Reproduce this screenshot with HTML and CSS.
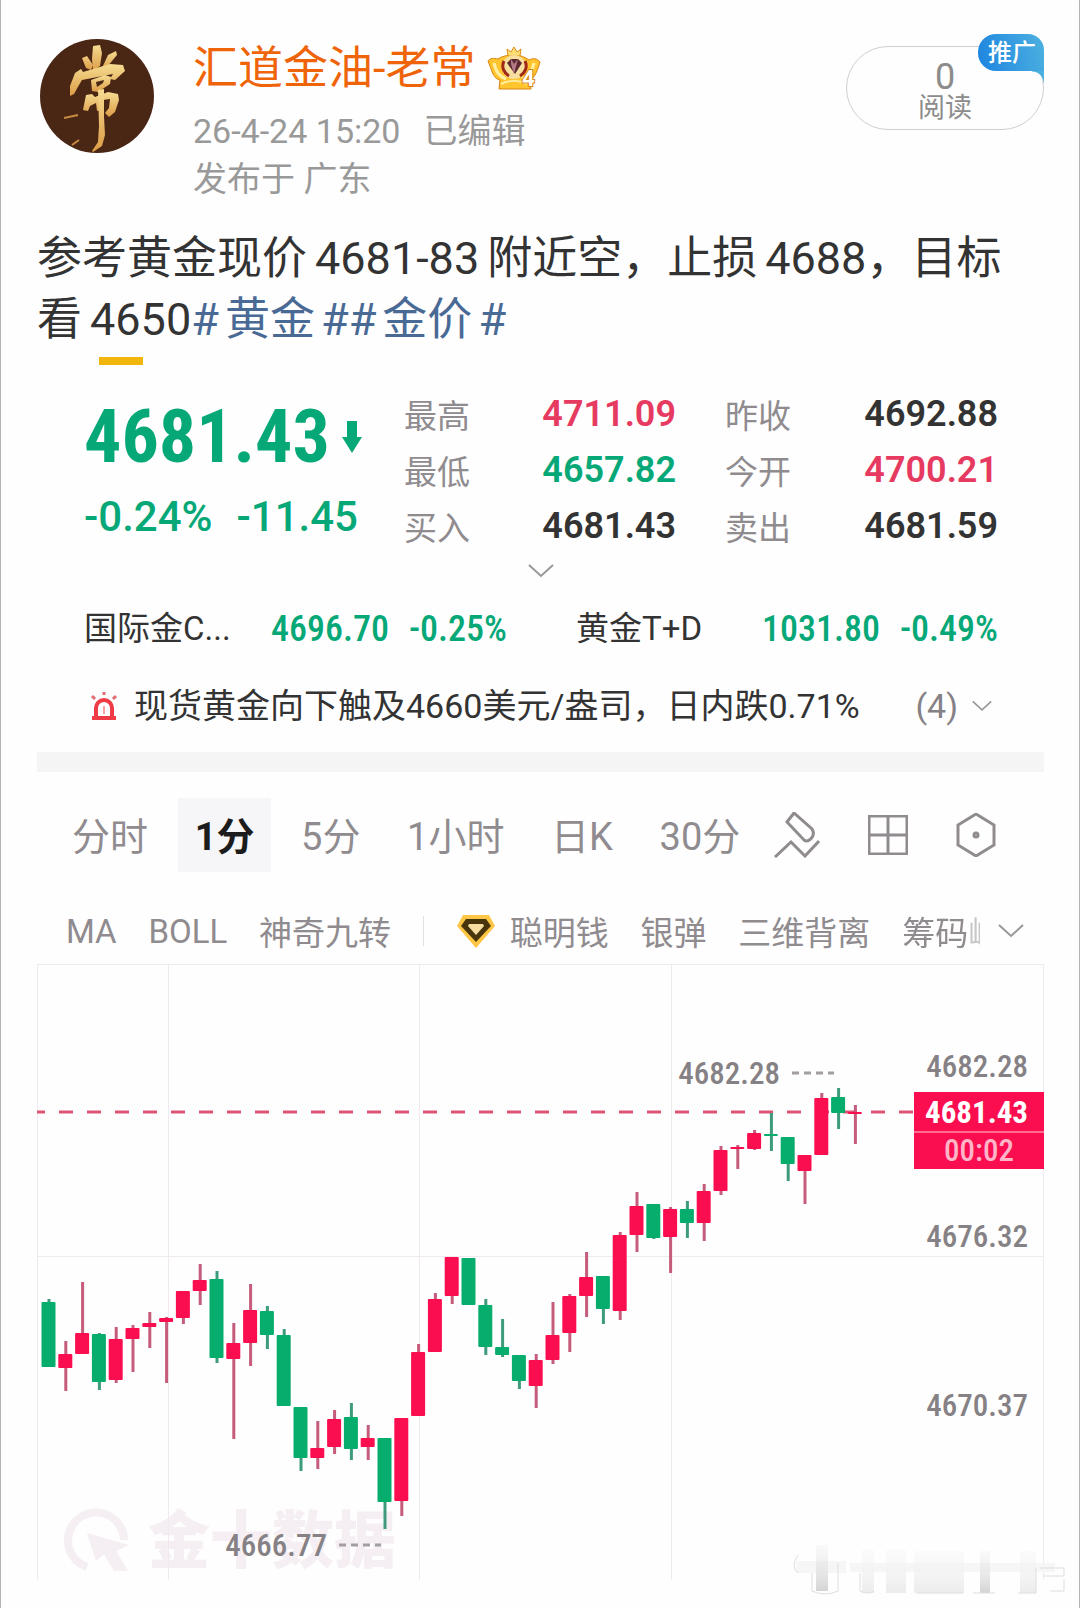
FILE: index.html
```html
<!DOCTYPE html>
<html lang="zh-CN">
<head>
<meta charset="utf-8">
<meta name="viewport" content="width=device-width, initial-scale=1">
<title>汇道金油-老常</title>
<link rel="stylesheet" href="styles.css">
</head>
<body>
<article class="post">
  <header class="post-head">
    <svg class="avatar" viewBox="0 0 114 114" role="img" aria-label="头像">
      <defs><linearGradient id="gold" x1="0" y1="0" x2="0" y2="1"><stop offset="0" stop-color="#f6dc92"/><stop offset="1" stop-color="#dc9c45"/></linearGradient></defs>
      <circle cx="57" cy="57" r="57" fill="#4a2615"/>
      <g fill="url(#gold)">
        <path d="M53 7l7-1 2 8-2 13-7 5-1-12z"/>
        <path d="M42 19l5-2 6 9-2 5-5-2zM68 16l8-4 1 4-10 12-5 1z"/>
        <path d="M35 34l6-4 2 3 27-8 13 1 2 6-10 9-5-1 3-5-31 6-3 5-5 9-4 2 0-10z"/>
        <path fill-rule="evenodd" d="M51 41l14-5 6 2-1 7-12 8-6-1zM56 43l8-2-1 3-6 4z"/>
        <path fill-rule="evenodd" d="M46 56l6-1 3 3 13-5 10 2 1 6-4 12-6 5-4-4 4-5 1-9-7 1-2 10-4 1-1-8-6 3-2 5-5-1z"/>
        <path d="M58 51l6-1 0 28 1 18-3 11-9 6-1-1 6-9 1-16z"/>
      </g>
      <path d="M24 79l14-3M32 106l7-5" fill="none" stroke="#c98b3f" stroke-width="2"/>
    </svg>
    <div class="author">
      <h1 class="name"><a href="#">汇道金油-老常</a>
        <svg class="crown" viewBox="0 0 54 46" aria-hidden="true">
          <path d="M11 13C7 12 3 12 1 15c2 4 3 9 5 13s4 5 7 6l-1 9h32l-1-9c5-2 8-11 10-18-3-4-7-4-11-2-4-3-9-5-15-5s-12 1-16 4z" fill="#ffc42e" stroke="#d98410"/>
          <path d="M20 3l4 3 3-5 3 5 4-3-1 7H21z" fill="#ffdf74" stroke="#de8d16"/>
          <path d="M7 17c2 9 5 13 12 16M47 17c-2 9-5 13-12 16" fill="none" stroke="#fff0a4" stroke-width="3"/>
          <circle cx="27" cy="21" r="12" fill="#f7dfa0"/>
          <path d="M17 15c-3 6 0 12 5 15M38 15c3 6 0 12-5 15" fill="none" stroke="#a02819" stroke-width="3"/>
          <path d="M20 17l4-4h7l4 4-7 11z" fill="#5d2930"/><path d="M24 13l3 5 4-5-4 15-3-10" fill="#b27886"/>
          <path d="M14 38c8-4 18-4 26 0" fill="none" stroke="#fff0a4" stroke-width="2"/>
          <text x="35" y="40" class="crown-level">4</text>
        </svg>
      </h1>
      <p class="meta"><time>26-4-24 15:20</time><span>已编辑</span></p>
      <p class="meta">发布于 广东</p>
    </div>
    <div class="reads">
      <strong>0</strong><span>阅读</span>
      <a class="promo" href="#">推广</a>
    </div>
  </header>

  <p class="body-text">参考黄金现价<span class="num">4681-83</span>附近空，止损<span class="num num-end">4688</span>，目标看<span class="num num-end">4650</span><a href="#">#<span class="topic">黄金</span>#</a><a href="#">#<span class="topic">金价</span>#</a></p>

  <section class="quote">
    <div class="tab-mark"></div>
    <div class="summary">
      <div class="price">
        <p class="last">4681.43<svg class="down" viewBox="0 0 20 32" aria-label="下跌"><path d="M5 0h10v16h5L10 32 0 16h5z"/></svg></p>
        <p class="change"><span>-0.24%</span><span>-11.45</span></p>
      </div>
      <dl class="stats">
        <div><dt>最高</dt><dd class="up">4711.09</dd></div>
        <div><dt>最低</dt><dd class="fall">4657.82</dd></div>
        <div><dt>买入</dt><dd>4681.43</dd></div>
      </dl>
      <dl class="stats">
        <div><dt>昨收</dt><dd>4692.88</dd></div>
        <div><dt>今开</dt><dd class="up">4700.21</dd></div>
        <div><dt>卖出</dt><dd>4681.59</dd></div>
      </dl>
    </div>
    <button class="expand" aria-label="展开"><svg class="chev" viewBox="0 0 26 14"><path d="M1 1l12 11L25 1"/></svg></button>
    <div class="related">
      <div class="pair"><span class="pair-name">国际金C...</span><span class="pair-data"><b>4696.70</b><b>-0.25%</b></span></div>
      <div class="pair"><span class="pair-name">黄金T+D</span><span class="pair-data"><b>1031.80</b><b>-0.49%</b></span></div>
    </div>
    <div class="alert">
      <svg class="siren" viewBox="0 0 28 30" aria-hidden="true"><path d="M6 26V17a8 8 0 0 1 16 0v9M2 27h24" fill="none" stroke="#ee3b46" stroke-width="4"/><path d="M14 15v8" stroke="#f6a0a4" stroke-width="2"/><path d="M14 1v3M2 5l3 3M26 5l-3 3" stroke="#e46b70" stroke-width="3"/></svg>
      <a class="alert-text" href="#">现货黄金向下触及4660美元/盎司，日内跌0.71%</a>
      <span class="alert-count">(4)</span>
      <svg class="chev chev-small" viewBox="0 0 26 14" aria-hidden="true"><path d="M1 1l12 11L25 1"/></svg>
    </div>
    <div class="band"></div>
    <nav class="periods">
      <button>分时</button>
      <button class="active">1分</button>
      <button>5分</button>
      <button>1小时</button>
      <button>日K</button>
      <button>30分</button>
      <div class="tools">
        <button aria-label="画线"><svg class="tool" viewBox="0 0 46 46"><path d="M20 1l-7 9 17 18c4 3 11-3 9-9l-1-2zM1 45l16-15 14 14 14-15"/></svg></button>
        <button aria-label="布局"><svg class="tool tool-grid" viewBox="0 0 40 40"><path d="M1 1h38v38H1zM20 1v38M1 20h38"/></svg></button>
        <button aria-label="设置"><svg class="tool tool-hex" viewBox="0 0 40 44"><path d="M20 1l18 11v20L20 43 2 32V12z"/><circle cx="20" cy="22" r="2"/></svg></button>
      </div>
    </nav>
    <nav class="indicators">
      <button>MA</button>
      <button>BOLL</button>
      <button>神奇九转</button>
      <span class="rule"></span>
      <button class="with-gem"><svg class="gem" viewBox="0 0 40 36" aria-hidden="true"><path d="M7 2h26l6 11-19 22L1 13z" fill="#ffc545"/><path d="M10 6h20l5 7-15 16L5 13z" fill="#49350c"/><path d="M13 11h14l1 2-8 9-8-9z" fill="#f7dda0"/></svg>聪明钱</button>
      <button>银弹</button>
      <button>三维背离</button>
      <button class="cut">筹码峰</button>
      <button class="more" aria-label="更多"><svg class="chev" viewBox="0 0 26 14"><path d="M1 1l12 11L25 1"/></svg></button>
    </nav>
    <svg class="chart" viewBox="37 964 1007 616" role="img" aria-label="1分钟K线图">
      <g class="mark">
        <path d="M87 1567a28 28 0 1 1 37-27" fill="none" stroke="#f5eef2" stroke-width="8"/>
        <path d="M87 1533l42 12-13 6 12 20h-14l-10-17-8 7z" fill="#f5eef2"/>
        <text x="148" y="1563">金十数据</text>
      </g>
      <path class="grid" d="M37 964.500h1007M37.500 964v616M168.500 964v616M419.500 964v616M671.500 964v616M1043.500 964v616M37 1256.500h1007"/>
      <path class="now" d="M37 1112H914"/>
      <g id="candles"></g>
      <path class="lead" d="M792 1073h42M339 1545h42"/>
      <text class="tick" x="780" y="1084" text-anchor="end">4682.28</text>
      <text class="tick" x="327" y="1556" text-anchor="end">4666.77</text>
      <text class="tick" x="1028" y="1077" text-anchor="end">4682.28</text>
      <text class="tick" x="1028" y="1247" text-anchor="end">4676.32</text>
      <text class="tick" x="1028" y="1416" text-anchor="end">4670.37</text>
      <path d="M914 1092h130v77H914z" fill="#fb0e50"/>
      <path d="M914 1132h130" stroke="#ff6a90" stroke-width="2"/>
      <text class="tick tick-now" x="1028" y="1123" text-anchor="end">4681.43</text>
      <text class="tick tick-time" x="979" y="1161" text-anchor="middle">00:02</text>
    </svg>
  </section>

  <svg class="smear" viewBox="0 0 280 54" aria-hidden="true">
    <defs><linearGradient id="fade" x1="0" y1="0" x2="0" y2="1"><stop offset="0" stop-color="#eee" stop-opacity=".3"/><stop offset="1" stop-color="#d4d4d4"/></linearGradient>
    <linearGradient id="soft" x1="0" y1="0" x2="0" y2="1"><stop offset="0" stop-color="#f7f7f7" stop-opacity=".4"/><stop offset="1" stop-color="#ececec"/></linearGradient></defs>
    <path d="M6 18h50v12H6zM60 20h205v9H60z" fill="#f6f6f6"/>
    <path d="M26 2h12v46H26z" fill="url(#fade)"/>
    <path d="M72 6h12v44H72zM96 6h20v44H96zM124 8h50v42h-50zM230 8h16v42h-16z" fill="url(#soft)"/>
    <path d="M190 8h10v42h-10z" fill="url(#fade)"/>
    <path d="M22 30v18q13 6 26 0V20M8 12q-8 12 0 18M70 30v18q8 4 14 0M127 50h46M183 50h22M228 50h18v-25M250 25h24v8h-20M274 36v12h-14" fill="none" stroke="#dedede"/>
  </svg>
</article>
<script src="chart.js"></script>
</body>
</html>
```
FILE: styles.css
```css
* { box-sizing: border-box; }
body {
  margin: 0;
  background: #fefefe;
  color: #333;
  font-family: Roboto, "Noto Sans CJK SC", sans-serif;
}
h1, p, dl, dd { margin: 0; }
a { color: inherit; text-decoration: none; }
svg { display: block; flex: none; }
button {
  padding: 0;
  border: 0;
  background: none;
  color: inherit;
  font: inherit;
  white-space: nowrap;
}
.post {
  min-height: 100vh;
  padding: 39px 35px 9px 36px;
  border: solid #b4b4b4;
  border-width: 0 1px;
}

.post-head { display: flex; align-items: flex-start; padding-left: 3px; }
.avatar { width: 114px; height: 114px; }
.author { flex: 1; margin-left: 39px; padding-top: 2px; }
.name {
  display: flex;
  align-items: center;
  gap: 12px;
  margin-bottom: 10px;
  color: #ef6408;
  font-size: 45px;
  font-weight: 400;
  line-height: 56px;
}
.crown { width: 54px; height: 46px; }
.crown-level {
  fill: #fff;
  stroke: #d98410;
  stroke-width: 2px;
  paint-order: stroke;
  font-size: 22px;
  font-weight: 700;
}
.meta { display: flex; gap: 23px; color: #999; font-size: 34px; line-height: 48px; }
.reads {
  position: relative;
  display: flex;
  flex-direction: column;
  align-items: center;
  width: 198px;
  height: 84px;
  margin-top: 7px;
  padding-top: 13px;
  border: 1px solid #d0d0d0;
  border-radius: 42px;
  color: #8c8c8c;
}
.reads strong { font-size: 36px; font-weight: 400; line-height: 34px; }
.reads span { font-size: 27px; line-height: 28px; }
.promo {
  position: absolute;
  top: -13px;
  right: -1px;
  width: 66px;
  height: 37px;
  padding-left: 2px;
  border-radius: 18px 16px 0 18px;
  background: linear-gradient(75deg, #1d84e0, #4db1e0);
  color: #fff;
  font-size: 24px;
  font-weight: 500;
  line-height: 38px;
  text-align: center;
}
.promo::after {
  content: "";
  position: absolute;
  top: 37px;
  right: 0;
  width: 12px;
  height: 12px;
  background: radial-gradient(circle at 0 100%, transparent 11px, #4db1e0 12px);
}

.body-text { margin-top: 25px; font-size: 45px; line-height: 61px; }
.body-text a { color: #4a6a96; }
.num { margin: 0 8px; }
.topic { margin: 0 6px; }
.num-end { margin-right: 0; }

.quote { padding-top: 7px; }
.tab-mark { width: 44px; height: 8px; margin-left: 62px; background: #f2b50c; }
.summary {
  display: grid;
  grid-template-columns: 320fr 272fr 49fr 273fr;
  margin-top: 21px;
  padding: 0 46px 0 47px;
}
.stats:last-child { grid-column: 4; }
.stats div { display: flex; justify-content: space-between; align-items: center; height: 56px; }
.stats dt { color: #8f8b8f; font-size: 33px; }
.stats dd { font-size: 36px; font-weight: 600; }
.stats .up { color: #e63a60; }
.stats .fall { color: #07a877; }
.price { min-width: 0; padding-top: 11px; color: #07a877; }
.last {
  display: flex;
  align-items: center;
  gap: 12px;
  font-family: "Roboto Condensed", Roboto, sans-serif;
  font-size: 74px;
  font-weight: 700;
  line-height: 80px;
}
.down { width: 20px; height: 32px; fill: currentColor; }
.change { display: flex; gap: 24px; margin-top: 14px; font-size: 42px; font-weight: 500; line-height: 52px; }
.expand { display: flex; justify-content: center; align-items: center; width: 100%; height: 34px; }
.chev { width: 26px; height: 14px; fill: none; stroke: #9a969a; stroke-width: 2; }
.chev-small { width: 20px; }
.related {
  display: grid;
  grid-template-columns: 423fr 422fr;
  gap: 69px;
  margin-top: 17px;
  padding: 0 46px 0 47px;
  line-height: 48px;
}
.pair, .pair-data { display: flex; justify-content: space-between; }
.pair-name { font-size: 33px; }
.pair-data {
  gap: 20px;
  color: #07a877;
  font-family: "Roboto Condensed", Roboto, sans-serif;
  font-size: 36px;
}
.pair-data b { font-weight: 500; }
.alert {
  display: flex;
  align-items: center;
  margin-top: 29px;
  padding: 0 52px 0 53px;
  font-size: 34px;
  line-height: 48px;
}
.siren { width: 28px; height: 30px; margin-right: 16px; }
.alert-text { flex: 1; white-space: nowrap; }
.alert-count { margin-right: 14px; color: #858185; }
.band { height: 20px; margin-top: 22px; background: #f5f5f6; }
.periods {
  display: flex;
  justify-content: space-between;
  align-items: center;
  padding: 26px 48px 0 35px;
  color: #8f8b8f;
  font-size: 38px;
}
.periods > button { height: 74px; padding-bottom: 4px; }
.periods .active {
  margin: 0 -17px;
  padding: 0 17px 4px;
  background: #f6f6f8;
  color: #1c1c1c;
  font-weight: 700;
}
.tools { display: flex; align-items: center; gap: 48px; margin-left: -13px; }
.tool { width: 46px; height: 46px; fill: none; stroke: #8f8b8f; stroke-width: 3; }
.tool-grid { width: 40px; height: 40px; }
.tool-hex { width: 40px; height: 44px; }
.indicators {
  display: flex;
  align-items: center;
  justify-content: space-between;
  height: 48px;
  margin: 35px 20px 9px 29px;
  color: #8f8b8f;
  font-size: 33px;
}
.rule { width: 1px; height: 30px; background: #e2e0e2; }
.with-gem { display: flex; align-items: center; gap: 14px; }
.gem { width: 40px; height: 36px; }
.cut {
  width: 78px;
  margin-right: -14px;
  overflow: hidden;
  -webkit-mask-image: linear-gradient(90deg, #000 64px, rgba(0, 0, 0, .5) 68px);
  mask-image: linear-gradient(90deg, #000 64px, rgba(0, 0, 0, .5) 68px);
}

.chart { width: 100%; height: auto; }
.grid { fill: none; stroke: #f0eaf0; stroke-width: 1; }
.now { stroke: #dc5574; stroke-width: 3; stroke-dasharray: 14 14; stroke-dashoffset: 6; }
.lead { stroke: #a29ea2; stroke-width: 3; stroke-dasharray: 7 5; }
.mark text { fill: #f5eef2; font-size: 62px; font-weight: 900; }
.tick { fill: #858185; font-family: "Roboto Condensed", Roboto, sans-serif; font-size: 31px; font-weight: 500; }
.tick-now { fill: #fff; font-weight: 700; }
.tick-time { fill: #ffb4c8; }
.candle-up { fill: #fb0e50; }
.candle-down { fill: #07ad6c; }
.wick-up { fill: #c55c7c; }
.wick-down { fill: #3d9b7c; }

.smear { width: 280px; height: 54px; margin: -37px -26px 0 auto; }
```
FILE: chart.js
```js
// One row per minute: direction, high, body top, body bottom, low.
const candles = [
  ["d",1299,1302,1367,1367],["u",1341,1354,1368,1391],["u",1282,1333,1354,1354],["d",1333,1334,1382,1390],
  ["u",1327,1339,1380,1383],["u",1325,1328,1339,1372],["u",1312,1323,1327,1348],["u",1317,1318,1322,1383],
  ["u",1291,1291,1318,1324],["u",1264,1280,1291,1305],["d",1271,1279,1358,1363],["u",1323,1343,1359,1439],
  ["u",1284,1310,1343,1366],["d",1306,1311,1335,1349],["d",1329,1335,1406,1406],["d",1407,1407,1458,1471],
  ["u",1421,1448,1458,1469],["u",1410,1419,1447,1454],["d",1403,1417,1449,1460],["u",1425,1438,1447,1460],
  ["d",1438,1438,1502,1529],["u",1418,1418,1501,1516],["u",1344,1352,1416,1416],["u",1293,1299,1352,1352],
  ["u",1257,1257,1296,1304],["d",1258,1258,1305,1305],["d",1299,1305,1347,1355],["d",1319,1347,1355,1357],
  ["d",1355,1355,1381,1389],["u",1354,1360,1386,1408],["u",1302,1335,1360,1364],["u",1294,1296,1333,1352],
  ["u",1252,1277,1296,1317],["d",1276,1276,1309,1324],["u",1232,1235,1311,1320],["u",1192,1206,1235,1252],
  ["d",1204,1204,1238,1239],["u",1207,1209,1237,1273],["d",1201,1209,1223,1238],["u",1184,1191,1223,1241],
  ["u",1146,1150,1191,1195],["u",1145,1147,1149,1169],["u",1130,1133,1149,1150],["d",1113,1134,1136,1151],
  ["d",1137,1137,1164,1181],["u",1155,1155,1171,1204],["u",1093,1098,1155,1155],["d",1088,1097,1113,1129],
  ["u",1105,1112,1114,1144]
];
const layer = document.getElementById("candles");
const bar = (cls, x, y, w, h, r) => {
  const el = document.createElementNS("http://www.w3.org/2000/svg", "rect");
  Object.entries({ class: cls, x, y, width: w, height: h, rx: r }).forEach(([k, v]) => el.setAttribute(k, v));
  layer.append(el);
};
candles.forEach(([dir, high, top, bottom, low], i) => {
  const side = dir === "u" ? "up" : "down";
  const center = 48.5 + i * 16.8;
  bar("wick-" + side, center - 1, high, 3, low - high, 0);
  bar("candle-" + side, center - 7, top, 14, bottom - top, 1);
});
```
